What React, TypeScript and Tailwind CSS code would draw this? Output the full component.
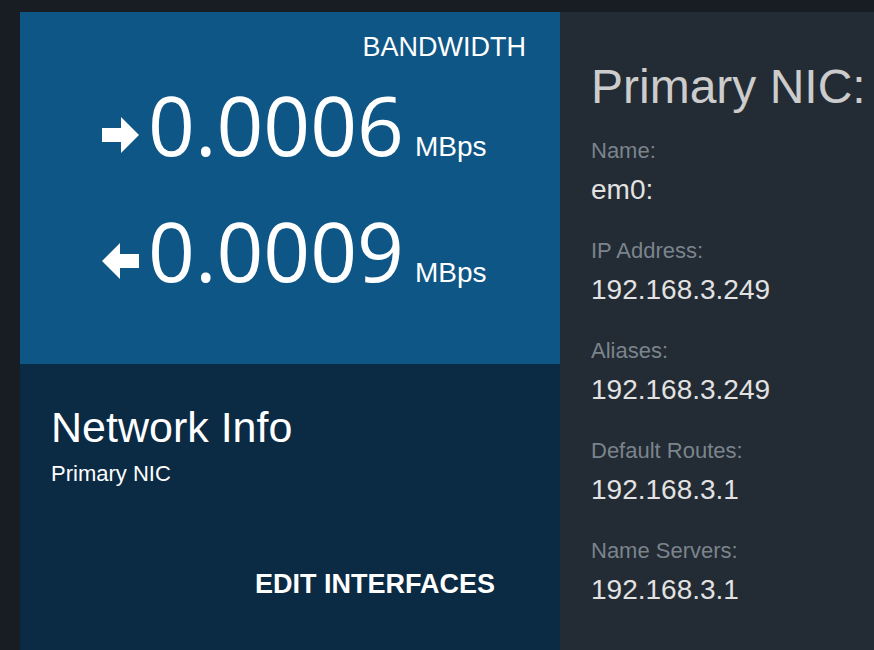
import React from 'react';

const SANS = "font-['Liberation_Sans',Arial,sans-serif]";

const Arrow: React.FC<{ dir: 'in' | 'out' }> = ({ dir }) => (
  <svg width="37" height="36" viewBox="0 0 37 36" className="self-end mb-[12px] shrink-0">
    {dir === 'out' ? (
      <path d="M0 11 H19 V0 L37 18 L19 36 V25 H0 Z" fill="#ffffff" />
    ) : (
      <path d="M37 11 H18 V0 L0 18 L18 36 V25 H37 Z" fill="#ffffff" />
    )}
  </svg>
);

const Rate: React.FC<{ dir: 'in' | 'out'; value: string; className?: string }> = ({ dir, value, className }) => (
  <div className={`flex items-baseline pl-[82px] ${className ?? ''}`}>
    <Arrow dir={dir} />
    <span className="ml-[9px] font-['Open_Sans',sans-serif] text-[82px] leading-none text-white">{value}</span>
    <span className={`ml-[11px] ${SANS} text-[28px] leading-none text-white`}>MBps</span>
  </div>
);

const fields = [
  { label: 'Name:', value: 'em0:' },
  { label: 'IP Address:', value: '192.168.3.249' },
  { label: 'Aliases:', value: '192.168.3.249' },
  { label: 'Default Routes:', value: '192.168.3.1' },
  { label: 'Name Servers:', value: '192.168.3.1' },
];

export default function App() {
  return (
    <div className={`w-full h-[650px] overflow-hidden bg-[#181d23] pl-[20px] pt-[12px] flex ${SANS}`}>
      {/* left card */}
      <div className="w-[540px] flex flex-col">
        <div className="h-[352px] bg-[#0e5686] flex flex-col">
          <div className="pt-[22px] pr-[34px] text-right text-[27px] leading-none text-white">BANDWIDTH</div>
          <Rate dir="out" value="0.0006" className="mt-[22px]" />
          <Rate dir="in" value="0.0009" className="mt-[44px]" />
        </div>
        <div className="flex-1 bg-[#0b2a44] pl-[31px] pt-[42px] flex flex-col">
          <div className="text-[43px] leading-none text-white">Network Info</div>
          <div className="mt-[14px] text-[22px] leading-none text-white">Primary NIC</div>
          <div className="mt-[86px] pr-[65px] flex justify-end">
            <span className="text-[27px] leading-none font-bold text-white">EDIT INTERFACES</span>
          </div>
        </div>
      </div>

      {/* right card */}
      <div className="flex-1 bg-[#232b34] pl-[31px] pt-[51px] flex flex-col">
        <div className="text-[48px] leading-none text-[#cccccc] whitespace-nowrap">Primary NIC:</div>
        <div className="mt-[29px] flex flex-col gap-[36px]">
          {fields.map((f) => (
            <div key={f.label} className="flex flex-col">
              <div className="text-[22px] leading-none text-[#7b848c]">{f.label}</div>
              <div className="mt-[14px] text-[28px] leading-none text-[#e2e2e2]">{f.value}</div>
            </div>
          ))}
        </div>
      </div>
    </div>
  );
}
